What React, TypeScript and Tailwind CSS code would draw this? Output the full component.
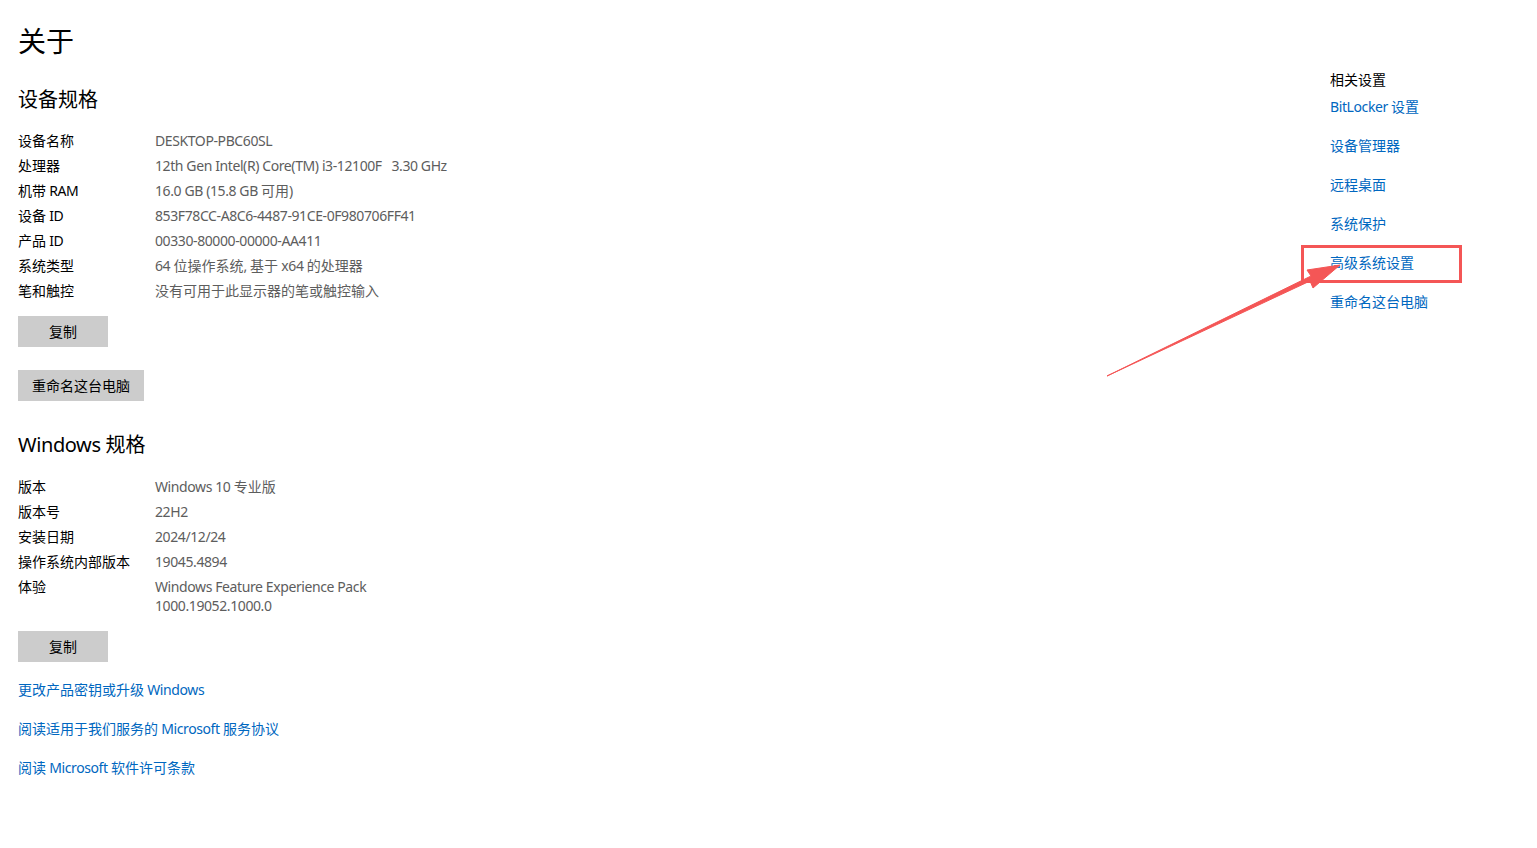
import React from "react";

const font = { fontFamily: '"Segoe UI", "Noto Sans", "Noto Sans CJK SC", sans-serif' };

function T({ children }: { children: string }) {
  const parts = children.split(/([\u3000-\u9fff\uff00-\uffef]+)/);
  return (
    <>
      {parts.map((p, i) =>
        /[\u3000-\u9fff\uff00-\uffef]/.test(p) ? (
          <span key={i}>{p}</span>
        ) : (
          <span key={i} className="tracking-[-0.4px]">
            {p}
          </span>
        )
      )}
    </>
  );
}

function Row({ label, children }: { label: string; children: React.ReactNode }) {
  return (
    <div className="flex py-[3px] text-[14px] leading-[19px]">
      <div className="w-[137px] shrink-0 text-[#000]">
        <T>{label}</T>
      </div>
      <div className="text-[#5d5d5d]">{typeof children === "string" ? <T>{children}</T> : children}</div>
    </div>
  );
}

function Btn({ children, w }: { children: React.ReactNode; w: string }) {
  return (
    <div className={`${w} h-[31px] bg-[#cccccc] flex items-center justify-center text-[14px] text-[#000]`}>
      {children}
    </div>
  );
}

export default function App() {
  const links = ["BitLocker 设置", "设备管理器", "远程桌面", "系统保护", "高级系统设置", "重命名这台电脑"];
  return (
    <div className="relative w-[1537px] h-[848px] bg-white overflow-hidden" style={font}>
      <div className="flex">
        <div className="pl-[18px] pt-[23px] flex flex-col">
          <div className="text-[28px] leading-[36px] text-[#000]">关于</div>
          <div className="mt-[27px] text-[20px] leading-[28px] text-[#000]">设备规格</div>
          <div className="mt-[13.5px]">
            <Row label="设备名称">DESKTOP-PBC60SL</Row>
            <Row label="处理器">{"12th Gen Intel(R) Core(TM) i3-12100F\u00a0\u00a0\u00a03.30 GHz"}</Row>
            <Row label="机带 RAM">16.0 GB (15.8 GB 可用)</Row>
            <Row label="设备 ID">853F78CC-A8C6-4487-91CE-0F980706FF41</Row>
            <Row label="产品 ID">00330-80000-00000-AA411</Row>
            <Row label="系统类型">64 位操作系统, 基于 x64 的处理器</Row>
            <Row label="笔和触控">没有可用于此显示器的笔或触控输入</Row>
          </div>
          <div className="mt-[13.5px]">
            <Btn w="w-[90px]">复制</Btn>
          </div>
          <div className="mt-[23px]">
            <Btn w="w-[126px]">重命名这台电脑</Btn>
          </div>
          <div className="mt-[30px] text-[20px] leading-[28px] text-[#000]">
            <T>Windows 规格</T>
          </div>
          <div className="mt-[14.5px]">
            <Row label="版本">Windows 10 专业版</Row>
            <Row label="版本号">22H2</Row>
            <Row label="安装日期">2024/12/24</Row>
            <Row label="操作系统内部版本">19045.4894</Row>
            <Row label="体验">
              <div>
                <T>Windows Feature Experience Pack</T>
              </div>
              <div>
                <T>1000.19052.1000.0</T>
              </div>
            </Row>
          </div>
          <div className="mt-[13.5px]">
            <Btn w="w-[90px]">复制</Btn>
          </div>
          <div className="mt-[18px] flex flex-col gap-[20px] text-[14px] leading-[19px] text-[#0067c0]">
            <div>
              <T>更改产品密钥或升级 Windows</T>
            </div>
            <div>
              <T>阅读适用于我们服务的 Microsoft 服务协议</T>
            </div>
            <div>
              <T>阅读 Microsoft 软件许可条款</T>
            </div>
          </div>
        </div>
        <div className="ml-auto w-[207px] pt-[70px] flex flex-col text-[14px] leading-[19px]">
          <div className="text-[#000]">相关设置</div>
          <div className="mt-[8px] flex flex-col gap-[20px] text-[#0067c0]">
            {links.map((l) => (
              <div key={l}>
                <T>{l}</T>
              </div>
            ))}
          </div>
        </div>
      </div>
      <div className="absolute left-[1301px] top-[245px] w-[161px] h-[38px] border-[3px] border-[#f45656]" />
      <svg className="absolute left-0 top-0 pointer-events-none" width="1537" height="848">
        <polygon
          points="1107,376 1310,281 1313,288 1340,265 1307,270 1311,276 1107,376"
          fill="#f45656"
          stroke="#f45656"
          strokeWidth="1"
          strokeLinejoin="round"
        />
      </svg>
    </div>
  );
}
